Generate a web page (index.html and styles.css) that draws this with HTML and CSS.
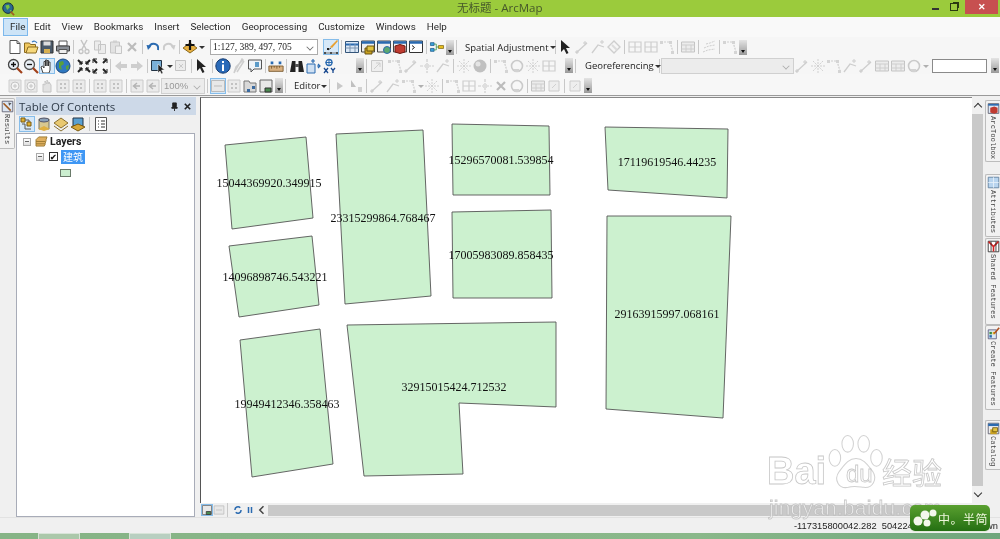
FILE: index.html
```html
<!DOCTYPE html>
<html lang="en">
<head>
<meta charset="utf-8">
<title>无标题 - ArcMap</title>
<link rel="stylesheet" href="styles.css">
</head>
<body>
<svg class="defs" width="0" height="0" aria-hidden="true">
<defs>
<symbol id="new" viewBox="0 0 16 16"><path d="M3 1.5h7l3 3v10H3z" fill="#fff" stroke="#555"/><path d="M10 1.5v3h3" fill="none" stroke="#555"/></symbol>
<symbol id="open" viewBox="0 0 16 16"><path d="M1.500 4h5l1 1.500h5v8h-11z" fill="#f0c860" stroke="#8a6a20"/><path d="M3 14l2-6h10l-2 6z" fill="#f6d87c" stroke="#8a6a20"/><path d="M9 3q3-2 5 1" fill="none" stroke="#3a7ac0" stroke-width="1.200"/></symbol>
<symbol id="save" viewBox="0 0 16 16"><path d="M2 2h12v12H2z" fill="#4a5a6a" stroke="#333"/><path d="M4.500 2.500h7v4h-7z" fill="#ddd"/><path d="M5 10h6v4H5z" fill="#d8b050"/></symbol>
<symbol id="print" viewBox="0 0 16 16"><path d="M4 2h8v5H4z" fill="#fff" stroke="#555"/><path d="M1.500 7h13v5h-13z" fill="#8a8f96" stroke="#444"/><path d="M4 10.500h8v4H4z" fill="#eee" stroke="#555"/></symbol>
<symbol id="cut" viewBox="0 0 16 16"><path d="M5 1l5 9M11 1l-5 9" stroke="#c4c4c4" stroke-width="1.500" fill="none"/><circle cx="5" cy="12.500" r="2" fill="none" stroke="#c4c4c4" stroke-width="1.300"/><circle cx="11" cy="12.500" r="2" fill="none" stroke="#c4c4c4" stroke-width="1.300"/></symbol>
<symbol id="copy" viewBox="0 0 16 16"><path d="M2.500 2h6v9h-6zM6.500 5.500h7v9h-7z" fill="#ececec" stroke="#c6c6c6"/></symbol>
<symbol id="paste" viewBox="0 0 16 16"><path d="M2.500 3h9v11h-9z" fill="#e2e2e2" stroke="#c6c6c6"/><path d="M5 1.500h4V4H5z" fill="#d0d0d0"/><path d="M7.500 7h6v7.500h-6z" fill="#f0f0f0" stroke="#c6c6c6"/></symbol>
<symbol id="del" viewBox="0 0 16 16"><path d="M4 4l8 8M12 4l-8 8" stroke="#bcbcbc" stroke-width="2.200"/></symbol>
<symbol id="undo" viewBox="0 0 16 16"><path d="M4 9q1-5 6-4 4 1 3 6" fill="none" stroke="#2a6ab0" stroke-width="2"/><path d="M1.500 6l5 .5L3 11z" fill="#2a6ab0"/></symbol>
<symbol id="redo" viewBox="0 0 16 16"><path d="M12 9q-1-5-6-4-4 1-3 6" fill="none" stroke="#cccccc" stroke-width="2"/><path d="M14.500 6l-5 .5L13 11z" fill="#cccccc"/></symbol>
<symbol id="add" viewBox="0 0 16 16"><path d="M8 4l7 5-7 5-7-5z" fill="#e8b040" stroke="#8a6a20"/><path d="M8 1v10M3.500 6h9" stroke="#111" stroke-width="2.200"/></symbol>
<symbol id="pen" viewBox="0 0 16 16"><path d="M14 1l1 1-6 7-2-1z" fill="#e8a030"/><path d="M8 9l-3 2" stroke="#555"/><path d="M1 13h2v2H1zM7 13h2v2H7zM13 13h2v2h-2zM4 9h2v2H4z" fill="#222"/><path d="M1 14h14" stroke="#777"/></symbol>
<symbol id="table" viewBox="0 0 16 16"><path d="M1.500 2.500h13v11h-13z" fill="#dbe8f6" stroke="#33557a"/><path d="M1.500 5.500h13" stroke="#2a6ab0" stroke-width="2"/><path d="M1.500 9h13M6 5v8M11 5v8" stroke="#7a93b0"/></symbol>
<symbol id="cata" viewBox="0 0 16 16"><path d="M1.500 2h13v11h-13z" fill="#eee" stroke="#444"/><path d="M1.500 3.500h13" stroke="#2a6ab0" stroke-width="2.500"/><path d="M5 9h7v6H5z" fill="#c8a020" stroke="#6a5510"/><path d="M7 7h7v5H7z" fill="#e2c340" stroke="#6a5510"/></symbol>
<symbol id="srch" viewBox="0 0 16 16"><path d="M1.500 2h13v11h-13z" fill="#eee" stroke="#444"/><path d="M1.500 3.500h13" stroke="#2a6ab0" stroke-width="2.500"/><circle cx="11" cy="11" r="3.500" fill="#5aa870" stroke="#2a6ab0"/></symbol>
<symbol id="tbox" viewBox="0 0 16 16"><path d="M1.500 2h13v11h-13z" fill="#eee" stroke="#444"/><path d="M1.500 3.500h13" stroke="#2a6ab0" stroke-width="2.500"/><path d="M3 7l5-1.500 5 1.500v6l-5 1.500L3 13z" fill="#c03a30" stroke="#701a14"/></symbol>
<symbol id="py" viewBox="0 0 16 16"><path d="M1.500 2h13v11.500h-13z" fill="#fff" stroke="#333"/><path d="M1.500 3.500h13" stroke="#2a6ab0" stroke-width="2.500"/><path d="M4 6.500l2.500 2L4 10.500" fill="none" stroke="#222"/></symbol>
<symbol id="model" viewBox="0 0 22 16"><path d="M2 2h5v4H2zM2 10h5v4H2z" fill="#3aa0d8" stroke="#1a5a8a"/><path d="M13 6h7v4h-7z" fill="#e8c020" stroke="#7a6510"/><path d="M7 4h3v8H7M10 8h3" fill="none" stroke="#2a8a3a"/></symbol>
<symbol id="arr" viewBox="0 0 16 16"><path d="M3 1l0 12 3-3 2.500 5 2-1-2.500-5h4z" fill="#222"/></symbol>
<symbol id="gline" viewBox="0 0 16 16"><path d="M2 14L13 4" stroke="#cecece" stroke-width="1.300"/><path d="M11 2v4M9 4h4M3 11v4M1 13h4" stroke="#cecece"/></symbol>
<symbol id="gline2" viewBox="0 0 16 16"><path d="M2 14l6-8 6 2" fill="none" stroke="#cecece" stroke-width="1.300"/><path d="M12 1v4M10 3h4" stroke="#cecece"/></symbol>
<symbol id="gdia" viewBox="0 0 16 16"><path d="M8 2l6 6-6 6-6-6z" fill="none" stroke="#cecece" stroke-width="1.400"/><path d="M6 6l5 5" stroke="#dcdcdc" stroke-width="2"/></symbol>
<symbol id="ggrid" viewBox="0 0 16 16"><path d="M2 3h12v10H2zM8 3v10M2 8h12" fill="none" stroke="#cecece" stroke-width="1.200"/></symbol>
<symbol id="gtab" viewBox="0 0 16 16"><path d="M1.500 3h13v10h-13z" fill="#ececec" stroke="#c4c4c4"/><path d="M1.500 6h13M1.500 10h13M6 6v7M11 6v7" stroke="#cecece"/></symbol>
<symbol id="gdash" viewBox="0 0 16 16"><path d="M2 13l5-2 7-1M3 9l5-2 6-1M5 5l4-1 5-2" fill="none" stroke="#cecece" stroke-dasharray="2 1"/></symbol>
<symbol id="gbox" viewBox="0 0 16 16"><path d="M2.500 2.500h11v11h-11z" fill="#eee" stroke="#c8c8c8"/><path d="M5 11l6-6M7 5h4v4" fill="none" stroke="#cecece"/></symbol>
<symbol id="gnode" viewBox="0 0 16 16"><path d="M2 3h9l3 10" fill="none" stroke="#cecece" stroke-width="1.200" stroke-dasharray="2 1"/><path d="M1 2h3v3H1zM10 2h3v3h-3zM12 12h3v3h-3z" fill="#d4d4d4"/></symbol>
<symbol id="gcross" viewBox="0 0 16 16"><path d="M1 8h14M8 1v14" stroke="#cecece" stroke-dasharray="3 1" stroke-width="1.200"/><path d="M6 6h4v4H6z" fill="#dedede"/></symbol>
<symbol id="gstar" viewBox="0 0 16 16"><path d="M8 1v14M1 8h14M3 3l10 10M13 3L3 13" stroke="#d0d0d0" stroke-dasharray="2 1"/></symbol>
<symbol id="gball" viewBox="0 0 16 16"><circle cx="8" cy="8" r="6.500" fill="#c0c0c0"/><circle cx="6" cy="6" r="2.500" fill="#e4e4e4"/></symbol>
<symbol id="gcirc" viewBox="0 0 16 16"><circle cx="8" cy="8" r="5.500" fill="none" stroke="#cacaca" stroke-width="1.600"/><path d="M5 11h5v3H5z" fill="#d2d2d2"/></symbol>
<symbol id="gplay" viewBox="0 0 16 16"><path d="M5 4l6 4-6 4z" fill="#c8c8c8"/></symbol>
<symbol id="gplay2" viewBox="0 0 16 16"><path d="M3 2l5 7H3z" fill="#c0c0c0"/><path d="M10 9h4v5h-4z" fill="#d2d2d2"/></symbol>
<symbol id="gzi" viewBox="0 0 16 16"><path d="M2 2h12v12H2z" fill="#e8e8e8" stroke="#cecece"/><circle cx="8" cy="8" r="4" fill="#f4f4f4" stroke="#c4c4c4"/><path d="M6 8h4M8 6v4" stroke="#c4c4c4"/></symbol>
<symbol id="gpan" viewBox="0 0 16 16"><path d="M4 14V6l2 1V3l2 3V2l2 4V4l2 3v7z" fill="#e2e2e2" stroke="#c6c6c6"/></symbol>
<symbol id="gfix" viewBox="0 0 16 16"><path d="M2 2h12v12H2z" fill="#ebebeb" stroke="#cacaca"/><path d="M5 5h2v2H5zM9 5h2v2H9zM5 9h2v2H5zM9 9h2v2H9z" fill="#c2c2c2"/></symbol>
<symbol id="gback" viewBox="0 0 16 16"><path d="M2 2h12v12H2z" fill="#ebebeb" stroke="#cacaca"/><path d="M11 8H5M8 5L4.500 8 8 11" fill="none" stroke="#b4b4b4" stroke-width="1.500"/></symbol>
<symbol id="gleft" viewBox="0 0 16 16"><path d="M14 6H8V3L2 8l6 5v-3h6z" fill="#cecece"/></symbol>
<symbol id="gright" viewBox="0 0 16 16"><path d="M2 6h6V3l6 5-6 5v-3H2z" fill="#cecece"/></symbol>
<symbol id="gpage" viewBox="0 0 16 16"><path d="M1.500 2.500h13v11h-13z" fill="#e8e8e8" stroke="#bbb"/><path d="M4 8h8" stroke="#bbb"/></symbol>
<symbol id="gsq" viewBox="0 0 16 16"><path d="M3 3h10v10H3z" fill="#eee" stroke="#cccccc"/><path d="M6 10l4-4" stroke="#d0d0d0"/></symbol>
<symbol id="lay1" viewBox="0 0 16 16"><path d="M2 3h5l1 2h6v9H2z" fill="#d8d8d8" stroke="#777"/><path d="M5 11h3v3H5zM10 8h3v3h-3z" fill="#3a6aa0"/></symbol>
<symbol id="lay2" viewBox="0 0 16 16"><path d="M2 2h12v12H2z" fill="#e8e8e8" stroke="#666"/><path d="M7 10h6v4H7z" fill="#4a8a50" stroke="#333"/></symbol>
<symbol id="src" viewBox="0 0 16 16"><path d="M3 3h10v10H3z" fill="#d8c890" stroke="#776"/><ellipse cx="8" cy="4" rx="5" ry="2" fill="#8aa0b8" stroke="#556"/><path d="M2 13l6 2 6-2-6-3z" fill="#e0b040"/></symbol>
<symbol id="lyrvis" viewBox="0 0 16 16"><path d="M8 2l7 5-7 5-7-5z" fill="#e8c870" stroke="#8a7030"/><path d="M1 10l7 5 7-5" fill="none" stroke="#8a7030"/></symbol>
<symbol id="tocsel" viewBox="0 0 16 16"><path d="M3 2h10v8H3z" fill="#5aa0d0" stroke="#234"/><path d="M1 11l7-3 7 3-7 4z" fill="#d8a838" stroke="#7a5a10"/></symbol>
<symbol id="opts" viewBox="0 0 16 16"><path d="M2.500 1.500h11v13h-11z" fill="#fff" stroke="#555"/><path d="M5 5h1M5 8h1M5 11h1M8 5h4M8 8h4M8 11h4" stroke="#333"/></symbol>
<symbol id="tocdraw" viewBox="0 0 16 16"><path d="M2 2h4v4H2zM8 6h4v4H8z" fill="#e0b030" stroke="#7a5a10"/><path d="M6 4h4v2M3 8h3v5h6" fill="none" stroke="#555"/></symbol>
<symbol id="zin" viewBox="0 0 16 16"><circle cx="6.500" cy="6.500" r="5" fill="#e8eef4" stroke="#444" stroke-width="1.300"/><path d="M4 6.500h5M6.500 4v5" stroke="#111" stroke-width="1.300"/><path d="M10 10l5 5" stroke="#a0401a" stroke-width="2.200"/></symbol>
<symbol id="zout" viewBox="0 0 16 16"><circle cx="6.500" cy="6.500" r="5" fill="#e8eef4" stroke="#555" stroke-width="1.300"/><path d="M4 6.500h5" stroke="#111" stroke-width="1.300"/><path d="M10 10l5 5" stroke="#a0401a" stroke-width="2.200"/></symbol>
<symbol id="hand" viewBox="0 0 16 16"><path d="M4 15l-2-6 1.500-1L5 10V3.500h1.500V8V2h1.500v6V2.500h1.500V8V4h1.500v8l-1 3z" fill="#fff" stroke="#333" stroke-width=".9"/></symbol>
<symbol id="globe" viewBox="0 0 16 16"><circle cx="8" cy="8" r="7" fill="#2f78c0" stroke="#1a4a80"/><path d="M4 4l4-1 1 3-3 2 1 4-3-2zM11 8l3-1-1 5-2-1z" fill="#5aa03a"/></symbol>
<symbol id="fin" viewBox="0 0 16 16"><path d="M2 2l4 4M14 2l-4 4M2 14l4-4M14 14l-4-4" stroke="#222" stroke-width="2"/><path d="M3 6h3V3M13 6h-3V3M3 10h3v3M13 10h-3v3" fill="none" stroke="#222"/></symbol>
<symbol id="fout" viewBox="0 0 16 16"><path d="M5 5L1.500 1.500M11 5l3.500-3.500M5 11l-3.500 3.500M11 11l3.500 3.500" stroke="#222" stroke-width="2"/><path d="M1 5V1h4M15 5V1h-4M1 11v4h4M15 11v4h-4" fill="none" stroke="#222"/></symbol>
<symbol id="selft" viewBox="0 0 16 16"><path d="M1.500 2.500h10v10h-10z" fill="#7ab0d8" stroke="#234"/><path d="M8 6l0 9 2-2 1.500 3 1.500-1-1.500-3h3z" fill="#222" stroke="#fff" stroke-width=".5"/></symbol>
<symbol id="clr" viewBox="0 0 16 16"><path d="M2.500 2.500h10v10h-10z" fill="#ececec" stroke="#c4c4c4"/><path d="M6 6l4 4M10 6l-4 4" stroke="#cacaca"/></symbol>
<symbol id="info" viewBox="0 0 16 16"><circle cx="8" cy="8" r="7.200" fill="#2a6ab8" stroke="#143a70"/><path d="M7 6.500h2V13H7zM7 3h2v2H7z" fill="#fff"/></symbol>
<symbol id="bolt" viewBox="0 0 16 16"><path d="M11 1L3 15l2-6 7-7zM13 3L6 14" fill="none" stroke="#cecece" stroke-width="1.500"/></symbol>
<symbol id="html" viewBox="0 0 16 16"><path d="M1.500 2h13v9H7l-3 3v-3H1.500z" fill="#eef3f8" stroke="#555"/><path d="M8 4h4v5H8z" fill="#5a9ac8"/></symbol>
<symbol id="meas" viewBox="0 0 18 16"><path d="M1 8h16v6H1z" fill="#d8b080" stroke="#7a5a30"/><path d="M4 8v3M7 8v2M10 8v3M13 8v2" stroke="#7a5a30"/><path d="M3 3h3v3H3zM12 3h3v3h-3z" fill="#2a6ab0"/></symbol>
<symbol id="bino" viewBox="0 0 16 16"><path d="M1 14l2-11h3.500v11zM15 14L13 3H9.500v11z" fill="#222"/><path d="M6 6h4v3H6z" fill="#555"/></symbol>
<symbol id="goto" viewBox="0 0 16 16"><path d="M2 6h8v9H2z" fill="#cfe0f2" stroke="#2a6ab0"/><path d="M8 5V1M6 3h4M12 8h3M13 6l2 2-2 2" fill="none" stroke="#2a6ab0" stroke-width="1.200"/></symbol>
<symbol id="xy" viewBox="0 0 16 16"><circle cx="8" cy="4.500" r="3" fill="none" stroke="#2a6ab0" stroke-width="1.300"/><path d="M8 1v7M4.500 4.500h7" stroke="#2a6ab0"/><path d="M3 10l4 5M7 10l-4 5M10 10l2 2.500 2-2.500M12 12.500V15" fill="none" stroke="#1a4a90" stroke-width="1.300"/></symbol>
<symbol id="res" viewBox="0 0 16 16"><path d="M1.500 1.500h13v13h-13z" fill="#dce6f2" stroke="#556"/><path d="M3 4l9 9" stroke="#a05a20" stroke-width="2"/><path d="M9 3l4 1-3 3z" fill="#555"/></symbol>
<symbol id="atb" viewBox="0 0 16 16"><path d="M1.500 2h13v12h-13z" fill="#dfe9f6" stroke="#556"/><path d="M1.500 3.500h13" stroke="#2a6ab0" stroke-width="2"/><path d="M4 7l5-1.500 4 1.500v6l-4 1.500L4 13z" fill="#c03a30"/></symbol>
<symbol id="attr" viewBox="0 0 16 16"><path d="M1.500 1.500h13v13h-13z" fill="#b8d4ee" stroke="#5a7a9a"/><path d="M1.500 8h13M8 1.500v13" stroke="#e8f2fa"/></symbol>
<symbol id="shr" viewBox="0 0 16 16"><path d="M1.500 1.500h13v13h-13z" fill="#fff" stroke="#222"/><path d="M2 2l6 6 6-6M8 8v6" fill="none" stroke="#d02020" stroke-width="2"/><path d="M5 2v12M11 2v12" stroke="#222"/></symbol>
<symbol id="crt" viewBox="0 0 16 16"><path d="M1.500 3.500h10v11h-10z" fill="#dce8f4" stroke="#557"/><path d="M3 6h3v3H3z" fill="#3a8a3a"/><path d="M7 6h3v3H7z" fill="#e0b020"/><path d="M3 10h3v3H3z" fill="#2a6ab0"/><path d="M15 1L9 8" stroke="#b05020" stroke-width="2"/></symbol>
<symbol id="cat" viewBox="0 0 16 16"><path d="M1.500 1.500h13v13h-13z" fill="#eee" stroke="#556"/><path d="M1.500 3.500h13" stroke="#2a6ab0" stroke-width="3"/><path d="M4 9h8v6H4z" fill="#c8a020"/><path d="M7 7h6v5H7z" fill="#e2c340" stroke="#6a5510"/></symbol>
</defs>
</svg>

<div class="page">
  <header class="title">
    <svg class="appicon" viewBox="0 0 16 16"><circle cx="8" cy="7" r="6" fill="#2a6a90" stroke="#123"/><path d="M5 4l4-1 1 3-3 3zM10 9l2 0-1 2z" fill="#7ac040"/><path d="M11 11l4 4" stroke="#a06020" stroke-width="2"/></svg>
    <span class="titletext">无标题 - ArcMap</span>
    <div class="winbtns">
      <span class="wmin"></span>
      <span class="wmax"></span>
      <span class="wclose">✕</span>
    </div>
  </header>

  <nav class="menu">
    <span class="mi sel">File</span><span class="mi">Edit</span><span class="mi">View</span><span class="mi">Bookmarks</span><span class="mi">Insert</span><span class="mi">Selection</span><span class="mi">Geoprocessing</span><span class="mi">Customize</span><span class="mi">Windows</span><span class="mi">Help</span>
  </nav>

  <div class="tb row1">
    <svg class="i"><use href="#new"/></svg><svg class="i"><use href="#open"/></svg><svg class="i"><use href="#save"/></svg><svg class="i"><use href="#print"/></svg>
    <i class="s"></i>
    <svg class="i"><use href="#cut"/></svg><svg class="i"><use href="#copy"/></svg><svg class="i"><use href="#paste"/></svg><svg class="i"><use href="#del"/></svg>
    <i class="s"></i>
    <svg class="i"><use href="#undo"/></svg><svg class="i"><use href="#redo"/></svg>
    <i class="s"></i>
    <svg class="i"><use href="#add"/></svg><b class="dd"></b>
    <span class="combo scale">1:127, 389, 497, 705<b class="chev"></b></span>
    <svg class="i on"><use href="#pen"/></svg>
    <i class="s"></i>
    <svg class="i"><use href="#table"/></svg><svg class="i"><use href="#cata"/></svg><svg class="i"><use href="#srch"/></svg><svg class="i"><use href="#tbox"/></svg><svg class="i"><use href="#py"/></svg>
    <i class="s"></i>
    <svg class="i"><use href="#model"/></svg>
    <b class="grip"></b>
    <i class="s"></i>
    <span class="lbl sa">Spatial Adjustment<b class="dd"></b></span>
    <i class="s"></i>
    <svg class="i"><use href="#arr"/></svg><svg class="i"><use href="#gline"/></svg><svg class="i"><use href="#gline2"/></svg><svg class="i"><use href="#gdia"/></svg>
    <i class="s"></i>
    <svg class="i"><use href="#ggrid"/></svg><svg class="i"><use href="#ggrid"/></svg><svg class="i"><use href="#gnode"/></svg>
    <i class="s"></i>
    <svg class="i"><use href="#gtab"/></svg>
    <i class="s"></i>
    <svg class="i"><use href="#gdash"/></svg>
    <i class="s"></i>
    <svg class="i"><use href="#gnode"/></svg>
    <b class="grip"></b>
  </div>

  <div class="tb row2">
    <svg class="i"><use href="#zin"/></svg><svg class="i"><use href="#zout"/></svg><svg class="i on"><use href="#hand"/></svg><svg class="i"><use href="#globe"/></svg>
    <i class="s"></i>
    <svg class="i"><use href="#fin"/></svg><svg class="i"><use href="#fout"/></svg>
    <i class="s"></i>
    <svg class="i"><use href="#gleft"/></svg><svg class="i"><use href="#gright"/></svg>
    <i class="s"></i>
    <svg class="i"><use href="#selft"/></svg><b class="dd"></b>
    <svg class="i"><use href="#clr"/></svg>
    <i class="s"></i>
    <svg class="i"><use href="#arr"/></svg>
    <i class="s"></i>
    <svg class="i"><use href="#info"/></svg><svg class="i"><use href="#bolt"/></svg><svg class="i"><use href="#html"/></svg>
    <i class="s"></i>
    <svg class="i"><use href="#meas"/></svg>
    <i class="s"></i>
    <svg class="i"><use href="#bino"/></svg><svg class="i"><use href="#goto"/></svg><svg class="i"><use href="#xy"/></svg>
    <b class="grip g19"></b>
    <i class="s"></i>
    <svg class="i"><use href="#gbox"/></svg><svg class="i m2"><use href="#gnode"/></svg><svg class="i"><use href="#gline"/></svg><svg class="i"><use href="#gcross"/></svg><svg class="i"><use href="#gline2"/></svg>
    <i class="s"></i>
    <svg class="i"><use href="#gstar"/></svg><svg class="i"><use href="#gball"/></svg>
    <i class="s"></i>
    <svg class="i"><use href="#gnode"/></svg><svg class="i"><use href="#gcirc"/></svg><svg class="i"><use href="#gstar"/></svg><svg class="i"><use href="#ggrid"/></svg>
    <b class="grip g8"></b>
    <i class="s"></i>
    <span class="lbl geo">Georeferencing<b class="dd"></b></span>
    <i class="s s0"></i>
    <span class="combo geoc"><b class="chev"></b></span>
    <svg class="i"><use href="#gline"/></svg><svg class="i"><use href="#gstar"/></svg><svg class="i"><use href="#gnode"/></svg><svg class="i"><use href="#gline2"/></svg><svg class="i"><use href="#gline"/></svg><svg class="i"><use href="#gtab"/></svg><svg class="i"><use href="#gtab"/></svg><svg class="i"><use href="#gcirc"/></svg><b class="dd lite"></b>
    <span class="input"></span>
    <b class="grip gend"></b>
  </div>

  <div class="tb row3">
    <svg class="i"><use href="#gzi"/></svg><svg class="i"><use href="#gzi"/></svg><svg class="i"><use href="#gpan"/></svg><svg class="i"><use href="#gfix"/></svg><svg class="i"><use href="#gfix"/></svg>
    <i class="s"></i>
    <svg class="i"><use href="#gfix"/></svg><svg class="i"><use href="#gfix"/></svg>
    <i class="s"></i>
    <svg class="i"><use href="#gback"/></svg><svg class="i"><use href="#gback"/></svg>
    <span class="combo pct">100%<b class="chev"></b></span>
    <i class="s"></i>
    <svg class="i on"><use href="#gpage"/></svg><svg class="i"><use href="#gfix"/></svg><svg class="i"><use href="#lay1"/></svg><svg class="i"><use href="#lay2"/></svg>
    <b class="grip"></b>
    <i class="s"></i>
    <span class="lbl ed">Editor<b class="dd"></b></span>
    <i class="s"></i>
    <svg class="i"><use href="#gplay"/></svg><svg class="i"><use href="#gplay2"/></svg>
    <i class="s"></i>
    <svg class="i"><use href="#gline"/></svg><svg class="i"><use href="#gline2"/></svg><svg class="i"><use href="#gnode"/></svg><b class="dd lite"></b>
    <svg class="i"><use href="#gstar"/></svg>
    <i class="s"></i>
    <svg class="i"><use href="#gnode"/></svg><svg class="i"><use href="#ggrid"/></svg><svg class="i"><use href="#gcross"/></svg><svg class="i"><use href="#del"/></svg><svg class="i"><use href="#gcirc"/></svg>
    <i class="s"></i>
    <svg class="i"><use href="#gtab"/></svg><svg class="i"><use href="#gsq"/></svg>
    <i class="s"></i>
    <svg class="i"><use href="#gsq"/></svg>
    <b class="grip"></b>
  </div>

  <main class="main">
    <aside class="rail left">
      <div class="tab tres"><svg class="ti"><use href="#res"/></svg><span class="vt">Results</span></div>
    </aside>

    <section class="toc">
      <div class="tochead"><span>Table Of Contents</span>
        <svg class="pin" viewBox="0 0 10 10"><path d="M3 1h4v4l1 1v1H2V6l1-1zM5 7v3" fill="#222" stroke="#222"/></svg>
        <svg class="pin" viewBox="0 0 10 10"><path d="M2 2l6 6M8 2l-6 6" stroke="#222" stroke-width="1.800"/></svg>
      </div>
      <div class="tocbar">
        <svg class="i on"><use href="#tocdraw"/></svg><svg class="i"><use href="#src"/></svg><svg class="i"><use href="#lyrvis"/></svg><svg class="i"><use href="#tocsel"/></svg>
        <i class="s"></i>
        <svg class="i"><use href="#opts"/></svg>
      </div>
      <div class="tree">
        <div class="node n0"><b class="minus"></b>
          <svg class="folder" viewBox="0 0 14 12"><path d="M1 4l3-3h9l-1 3v1l-1 3v1l-1 2H1z" fill="#e0b060" stroke="#9a7a30"/><path d="M1 6h10M1 8.500h10" stroke="#9a7a30"/></svg>
          <strong>Layers</strong></div>
        <div class="node n1"><b class="minus"></b><b class="check">✔</b><span class="layer">建筑</span></div>
        <div class="node n2"><b class="swatch"></b></div>
      </div>
    </section>

    <section class="mapcol">
      <div class="maprow">
        <svg class="map" viewBox="201 98 771 405">
          <g class="poly">
            <polygon points="225,145 306,137 313,218 232,229"/>
            <polygon points="229,246 312,236 319,305 239,317"/>
            <polygon points="240,340 320,329 333,464 252,477"/>
            <polygon points="336,134 423,130 431,296 345,304"/>
            <polygon points="452,124 549,126 550,195 453,195"/>
            <polygon points="452,212 551,210 552,298 453,298"/>
            <polygon points="347,325 556,322 556,407 459,403 463,474 364,476"/>
            <polygon points="605,127 728,129 727,198 608,190"/>
            <polygon points="607,216 731,216 723,418 606,409"/>
          </g>
          <g class="lab">
            <text x="269" y="187">15044369920.349915</text>
            <text x="275" y="281">14096898746.543221</text>
            <text x="287" y="408">19949412346.358463</text>
            <text x="383" y="222">23315299864.768467</text>
            <text x="501" y="164">15296570081.539854</text>
            <text x="501" y="259">17005983089.858435</text>
            <text x="454" y="391">32915015424.712532</text>
            <text x="667" y="166">17119619546.44235</text>
            <text x="667" y="318">29163915997.068161</text>
          </g>
        </svg>
        <div class="vscroll"><b class="up"></b><b class="down"></b></div>
      </div>
      <div class="hrow">
        <svg class="i on"><use href="#lay2"/></svg><svg class="i"><use href="#gpage"/></svg>
        <i class="s"></i>
        <svg class="i" viewBox="0 0 16 16"><path d="M4 8a4 4 0 0 1 7-3M12 8a4 4 0 0 1-7 3" fill="none" stroke="#2a6ab0" stroke-width="2"/></svg>
        <svg class="i" viewBox="0 0 16 16"><path d="M5 4h2v8H5zM9 4h2v8H9z" fill="#2a6ab0"/></svg>
        <svg class="i" viewBox="0 0 16 16"><path d="M10 3L5 8l5 5" fill="none" stroke="#444" stroke-width="2"/></svg>
        <div class="hscroll"></div>
      </div>
    </section>

    <aside class="rail right">
      <div class="tab tatb"><svg class="ti"><use href="#atb"/></svg><span class="vt">ArcToolbox</span></div>
      <div class="tab tattr"><svg class="ti"><use href="#attr"/></svg><span class="vt">Attributes</span></div>
      <div class="tab tshr"><svg class="ti"><use href="#shr"/></svg><span class="vt">Shared Features</span></div>
      <div class="tab tcrt"><svg class="ti"><use href="#crt"/></svg><span class="vt">Create Features</span></div>
      <div class="tab tcat"><svg class="ti"><use href="#cat"/></svg><span class="vt">Catalog</span></div>
    </aside>
  </main>

  <footer class="status"><span>-117315800042.282&nbsp;&nbsp;504224</span><span class="unit">wn</span></footer>
  <div class="task"><span class="tk tk1"></span><span class="tk tk2"></span></div>

  <div class="wm">
    <svg class="paw" viewBox="0 0 100 90">
      <g fill="#fff" stroke="#cfcfcf" stroke-width="1.600" opacity=".95">
        <ellipse cx="17" cy="37" rx="9" ry="13"/><ellipse cx="37" cy="15" rx="9" ry="13"/><ellipse cx="62" cy="15" rx="9" ry="13"/><ellipse cx="82" cy="37" rx="9" ry="13"/>
        <path d="M50 38c12 0 18 10 26 20 8 12 0 27-14 25-8-1-16-3-24 0C24 86 14 72 24 58c8-10 14-20 26-20z"/>
      </g>
    </svg>
    <span class="wm-bai">Bai</span>
    <span class="wm-du">du</span>
    <span class="wm-cn">经验</span>
    <span class="wm-url">jingyan.baidu.com</span>
    <div class="badge">
      <svg class="flower" viewBox="0 0 26 22"><g fill="#f4f8ec"><circle cx="6" cy="14" r="4.500"/><circle cx="13" cy="8" r="4.500"/><circle cx="21" cy="6" r="3.500"/><circle cx="15" cy="16" r="3.500"/></g></svg>
      <span>中。半简</span>
    </div>
  </div>
</div>
</body>
</html>
```
FILE: styles.css
```css
* { box-sizing: border-box; }
html, body { margin: 0; padding: 0; }
body { width: 1000px; height: 539px; overflow: hidden; background: #f0f0f0; }
.defs { position: absolute; }
.page {
  position: relative; width: 1000px; height: 539px; overflow: hidden;
  display: flex; flex-direction: column;
  font-family: "Open Sans", "Noto Sans", "Noto Sans CJK SC", sans-serif;
  color: #222; filter: blur(.3px);
}

.title { height: 17px; background: #9bcb3c; display: flex; align-items: center; position: relative; flex: none; }
.appicon { width: 14px; height: 14px; margin-left: 1px; }
.titletext { position: absolute; left: 457px; top: 0; line-height: 16px; font-size: 11.500px; color: #46582a; white-space: nowrap; font-family: "Open Sans", "Noto Sans CJK SC", sans-serif; }
.winbtns { margin-left: auto; display: flex; align-items: flex-start; height: 17px; padding-right: 2px; }
.wmin { width: 7px; height: 2px; background: #333; margin: 8px 11px 0 0; }
.wmax { width: 8px; height: 8px; border: 1.500px solid #2a3a10; margin: 3px 7px 0 0; box-shadow: 2px -2px 0 -1px #2a3a10; }
.wclose { width: 33px; height: 14px; background: #c75050; color: #fff; font-size: 9px; line-height: 14px; text-align: center; font-weight: 700; }

.menu { height: 20px; background: #f9f9f9; display: flex; align-items: center; padding-left: 3px; flex: none; font-family: Roboto, "Open Sans", sans-serif; font-size: 9.800px; }
.mi { height: 18px; line-height: 16px; padding: 0 5px; margin-right: -1px; white-space: nowrap; border: 1px solid transparent; color: #2a2a2a; }
.mi.sel { background: #cde4f7; border-color: #7db8ec; padding: 0 6px; width: 25px; margin-right: 0; }

.tb { display: flex; align-items: center; padding-left: 7px; background: #f6f6f6; flex: none; font-size: 10px; }
.row1 { height: 20px; }
.row2 { height: 17px; }
.row3 { height: 22px; padding-top: 2px; border-bottom: 1px solid #9a9a9a; background: #f7f7f7; }
.i { width: 16px; height: 16px; flex: none; display: block; }
.i.on { background: #d6e8f8; outline: 1px solid #86bdea; outline-offset: -1px; }
.m2 { margin-left: 2px; }
.s { width: 1px; height: 14px; margin: 0 2px; background: #c8c8c8; flex: none; display: block; }
.dd { width: 7px; height: 16px; flex: none; position: relative; display: block; }
.dd::after { content: ""; position: absolute; left: 1px; top: 7px; border: 3px solid transparent; border-top-color: #333; border-bottom: 0; }
.dd.lite::after { border-top-color: #b0b0b0; }
.grip { width: 8px; height: 15px; flex: none; margin-left: 1px; display: block; position: relative; background: linear-gradient(#e4e4e4, #9a9a9a); }
.grip::after { content: ""; position: absolute; left: 2px; bottom: 2px; border: 2px solid transparent; border-top: 3px solid #111; border-bottom: 0; }
.g19 { margin-left: 19px; }
.g8 { margin-left: 8px; }
.gend { margin-left: 4px; }

.combo { height: 16px; background: #fff; border: 1px solid #ababab; display: flex; align-items: center; padding-left: 2px; flex: none; position: relative; font-family: "Liberation Serif", serif; font-size: 9.500px; white-space: nowrap; }
.chev { position: absolute; right: 4px; top: 4px; width: 6px; height: 6px; border: solid #666; border-width: 0 1.200px 1.200px 0; transform: rotate(45deg) scale(.85); }
.scale { width: 108px; margin: 0 5px; }
.pct { width: 44px; background: #ececec; color: #999; font-family: "Liberation Sans", sans-serif; font-size: 9.500px; border-color: #d0d0d0; }
.pct .chev, .geoc .chev { border-color: #aaa; }
.geoc { width: 133px; background: #ececec; border-color: #d0d0d0; }
.s0 { margin: 0 1px 0 0; }
.input { width: 55px; height: 14px; background: #fff; border: 1px solid #8a8a8a; margin-left: 3px; flex: none; }
.lbl { display: flex; align-items: center; white-space: nowrap; font-size: 9.500px; color: #222; flex: none; }
.sa { margin-left: 6px; width: 88px; }
.geo { margin-left: 7px; width: 74px; }
.ed { margin-left: 6px; width: 33px; }

.main { flex: 1; display: flex; min-height: 0; background: #f0f0f0; }
.rail { flex: none; position: relative; display: flex; flex-direction: column; }
.rail.left { width: 16px; padding-top: 2px; }
.rail.right { width: 16px; padding-top: 4px; }
.tab { width: 15px; background: #f2f2f2; border: 1px solid #bcbcbc; display: flex; flex-direction: column; align-items: center; }
.left .tab { border-left: 0; border-radius: 0 2px 2px 0; }
.right .tab { border-right: 0; border-radius: 2px 0 0 2px; margin-left: 1px; }
.ti { width: 13px; height: 13px; flex: none; margin-top: 1px; }
.vt { writing-mode: vertical-rl; font-family: "Liberation Mono", monospace; font-size: 7.200px; color: #444; margin-top: 1px; white-space: nowrap; }
.tres { height: 51px; }
.tatb { height: 62px; }
.tattr { height: 63px; margin-top: 12px; }
.tshr { height: 87px; margin-top: 1px; }
.tcrt { height: 85px; }
.tcat { height: 50px; margin-top: 10px; }

.toc { width: 180px; flex: none; display: flex; flex-direction: column; }
.tochead { height: 18px; background: #cdd9e8; display: flex; align-items: center; padding-left: 3px; font-size: 11.500px; color: #2e3a48; margin-top: 1px; flex: none; }
.tochead span { flex: 1; }
.pin { width: 9px; height: 9px; margin-right: 4px; }
.tocbar { height: 18px; display: flex; align-items: center; padding-left: 3px; gap: 1px; flex: none; }
.tree { flex: 1; background: #fff; border: 1px solid #a8acb8; margin-right: 1px; }
.node { height: 15px; display: flex; align-items: center; font-size: 9.500px; }
.n0 { padding-left: 6px; }
.n0 strong { font-family: Roboto, sans-serif; font-size: 10.500px; }
.n1 { padding-left: 19px; }
.n2 { padding-left: 43px; margin-top: 1px; }
.minus { width: 8px; height: 8px; border: 1px solid #aaa; background: linear-gradient(#fff, #ddd) ; position: relative; display: block; }
.minus::after { content: ""; position: absolute; left: 1px; top: 2px; width: 4px; height: 1px; background: #666; }
.folder { width: 13px; height: 11px; margin: 0 2px 0 4px; }
.check { width: 9px; height: 9px; border: 1px solid #333; background: #fff; margin-left: 5px; font-size: 8px; line-height: 7px; text-align: center; display: block; }
.layer { background: #3f97f4; color: #fff; padding: 0 2px; margin-left: 3px; height: 14px; line-height: 14px; font-family: "Noto Sans CJK SC", sans-serif; font-size: 10px; }
.swatch { width: 11px; height: 8px; background: #cbeecf; border: 1px solid #6a7a6a; display: block; }

.mapcol { flex: 1; display: flex; flex-direction: column; min-width: 0; padding-left: 4px; }
.maprow { flex: 1; display: flex; min-height: 0; }
.map { width: 772px; height: 406px; background: #fff; border-left: 1px solid #555; border-top: 1px solid #888; flex: none; display: block; margin-top: 1px; }
.poly polygon { fill: #ccf1cf; stroke: #555; stroke-width: .9; }
.lab text { font-family: "Liberation Serif", serif; font-size: 12px; fill: #111; text-anchor: middle; }
.vscroll { width: 11px; background: #c9c9c9; margin-top: 1px; position: relative; flex: none; }
.vscroll .up, .vscroll .down { position: absolute; left: 0; width: 11px; height: 17px; background: #f0f0f0; display: block; }
.vscroll .up { top: 0; }
.vscroll .down { bottom: 0; }
.vscroll .up::after, .vscroll .down::after { content: ""; position: absolute; left: 3px; width: 5px; height: 5px; border: solid #333; border-width: 1.500px 0 0 1.500px; }
.vscroll .up::after { top: 7px; transform: rotate(45deg); }
.vscroll .down::after { top: 4px; transform: rotate(225deg); }
.hrow { height: 14px; display: flex; align-items: center; flex: none; padding-left: 1px; }
.hrow .i { width: 12px; height: 12px; }
.hrow .s { margin: 0 4px 0 2px; }
.hscroll { flex: 1; height: 11px; background: #c9c9c9; margin-right: 11px; }

.status { height: 16px; background: #f0f0f0; border-top: 1px solid #e2e2e2; flex: none; display: flex; align-items: center; padding: 0 2px 0 794px; font-family: "Liberation Sans", sans-serif; font-size: 9.300px; color: #222; white-space: nowrap; }
.unit { margin-left: auto; }
.task { height: 6px; background: linear-gradient(90deg, #86b486, #8ab88a 70%, #6fa67c); flex: none; position: relative; display: flex; }
.tk { display: block; height: 6px; width: 42px; background: #abc8aa; border: 1px solid #d8e4d8; border-bottom: 0; }
.tk1 { margin-left: 38px; }
.tk2 { margin-left: 49px; background: #b8cfc0; }

.wm { position: absolute; left: 0; top: 0; width: 1000px; height: 539px; pointer-events: none; }
.paw { position: absolute; left: 824px; top: 431px; width: 64px; height: 64px; }
.wm span { position: absolute; color: rgba(255,255,255,.65); -webkit-text-stroke: .8px rgba(185,185,185,.8); white-space: nowrap; line-height: 1; }
.wm-bai { left: 767px; top: 452px; font: 700 38px "Liberation Sans", sans-serif; }
.wm-du { left: 846px; top: 462px; font: 400 24px "Liberation Sans", sans-serif; }
.wm-cn { left: 882px; top: 456px; font: 400 30px "Noto Sans CJK SC", sans-serif; }
.wm-url { left: 769px; top: 497px; font: 400 21px "Liberation Sans", sans-serif; letter-spacing: .2px; }
.badge { position: absolute; left: 910px; top: 505px; width: 80px; height: 26px; border-radius: 5px; background: linear-gradient(#5aa030, #246f12); box-shadow: 0 1px 0 #dfe8d8; display: flex; align-items: center; padding-left: 2px; }
.flower { width: 26px; height: 22px; flex: none; }
.badge span { position: static; color: #eef6dc; -webkit-text-stroke: 0; font: 400 12px "Noto Sans CJK SC", sans-serif; letter-spacing: .5px; }
```
